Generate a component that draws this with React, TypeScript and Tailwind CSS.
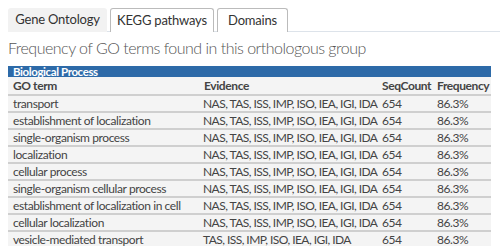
const rows: [string, string][] = [
  ["transport", "NAS, TAS, ISS, IMP, ISO, IEA, IGI, IDA"],
  ["establishment of localization", "NAS, TAS, ISS, IMP, ISO, IEA, IGI, IDA"],
  ["single-organism process", "NAS, TAS, ISS, IMP, ISO, IEA, IGI, IDA"],
  ["localization", "NAS, TAS, ISS, IMP, ISO, IEA, IGI, IDA"],
  ["cellular process", "NAS, TAS, ISS, IMP, ISO, IEA, IGI, IDA"],
  ["single-organism cellular process", "NAS, TAS, ISS, IMP, ISO, IEA, IGI, IDA"],
  ["establishment of localization in cell", "NAS, TAS, ISS, IMP, ISO, IEA, IGI, IDA"],
  ["cellular localization", "NAS, TAS, ISS, IMP, ISO, IEA, IGI, IDA"],
  ["vesicle-mediated transport", "TAS, ISS, IMP, ISO, IEA, IGI, IDA"],
]

export default function App() {
  return (
    <div className="w-[500px] h-[246px] overflow-hidden bg-white pl-2 pt-2 text-[#444] font-['Lato','Liberation_Sans',sans-serif]">
      <div className="flex gap-[3px] border-b border-[#dde3ea] h-6">
        <div className="w-[99px] h-6 bg-[#f2f2f2] rounded-t-[3px] flex items-center justify-center text-[13px] tracking-[-0.2px] text-[#333]">
          Gene Ontology
        </div>
        <div className="w-[104px] h-6 bg-white border border-b-0 border-[#bbb] rounded-t-[3px] flex items-center justify-center text-[13px] tracking-[-0.2px] text-[#333]">
          KEGG pathways
        </div>
        <div className="w-[71px] h-6 bg-white border border-b-0 border-[#bbb] rounded-t-[3px] flex items-center justify-center text-[13px] tracking-[-0.2px] text-[#333]">
          Domains
        </div>
      </div>

      <h2 className="mt-[6px] text-[16px] leading-5 font-light text-[#555] tracking-[-0.5px]">
        Frequency of GO terms found in this orthologous group
      </h2>

      <table className="mt-[8px] w-[483px] table-fixed border-collapse text-[12px] leading-[15px] tracking-[-0.4px]">
        <colgroup>
          <col className="w-[191px]" />
          <col className="w-[178px]" />
          <col className="w-[55px]" />
          <col className="w-[59px]" />
        </colgroup>
        <thead>
          <tr className="bg-[#2d6aa8] text-white">
            <th colSpan={4} className="h-[11px] px-[5px] text-left text-[11.5px] font-bold leading-[11px]">
              Biological Process
            </th>
          </tr>
          <tr className="bg-[#f4f4f4] border-b-2 border-[#cfcfcf]">
            <th className="h-[17px] px-[5px] text-left font-bold leading-[17px]">GO term</th>
            <th className="px-[5px] text-left font-bold">Evidence</th>
            <th className="px-[5px] text-left font-bold whitespace-nowrap">SeqCount</th>
            <th className="px-[5px] text-left font-bold whitespace-nowrap">Frequency</th>
          </tr>
        </thead>
        <tbody>
          {rows.map(([term, ev]) => (
            <tr key={term} className="bg-[#f4f4f4] border-b-2 border-[#cfcfcf]">
              <td className="h-[15px] px-[5px] whitespace-nowrap">{term}</td>
              <td className="pl-[4px] pr-0 whitespace-nowrap tracking-[-0.55px]">{ev}</td>
              <td className="px-[5px]">654</td>
              <td className="px-[5px]">86.3%</td>
            </tr>
          ))}
        </tbody>
      </table>
    </div>
  )
}
